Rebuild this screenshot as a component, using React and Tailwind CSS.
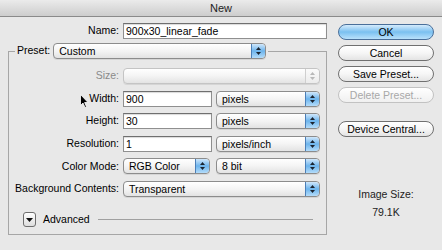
import React from "react";

const font = { fontFamily: '"Liberation Sans", Arial, sans-serif' };

const Stepper = ({ disabled }) => (
  <div
    className={
      disabled
        ? "flex flex-col items-center justify-center gap-[2px] w-[14px] h-full rounded-r-[4px] border-l border-[#cfcfcf] bg-linear-to-b from-[#fafafa] to-[#ececec]"
        : "flex flex-col items-center justify-center gap-[2px] w-[14px] h-full rounded-r-[4px] border-l border-[#4b7fb8] bg-linear-to-b from-[#cfe7fb] via-[#6cb4ec] to-[#b3dcfa]"
    }
  >
    <svg width="5" height="3" viewBox="0 0 5 3">
      <path d="M2.5 0L5 3H0z" fill={disabled ? "#b8b8b8" : "#1b2430"} />
    </svg>
    <svg width="5" height="3" viewBox="0 0 5 3">
      <path d="M0 0h5L2.5 3z" fill={disabled ? "#b8b8b8" : "#1b2430"} />
    </svg>
  </div>
);

const Select = ({ value, className, disabled }) => (
  <div
    className={`flex items-stretch h-[16px] rounded-[4px] border ${
      disabled ? "border-[#c4c4c4]" : "border-[#8c8c8c]"
    } bg-linear-to-b from-white via-[#f4f4f4] to-[#e3e3e3] shadow-[0_1px_0_rgba(0,0,0,0.08)] ${className}`}
  >
    <div className="flex-1 pl-[5px] leading-[14px] text-[10.5px] text-black">{value}</div>
    <Stepper disabled={disabled} />
  </div>
);

const Input = ({ value, className }) => (
  <div
    className={`h-[16px] bg-white border border-[#8f8f8f] border-t-[#6f6f6f] shadow-[inset_0_1px_1px_rgba(0,0,0,0.15)] pl-[2px] leading-[14px] text-[10.5px] text-black ${className}`}
  >
    {value}
  </div>
);

const Button = ({ label, primary, disabled, className = "" }) => (
  <div
    className={`h-[16px] w-[96px] rounded-full border text-center leading-[14px] text-[10.5px] ${
      primary
        ? "border-[#4a6f9a] bg-linear-to-b from-[#d4ebfc] via-[#7ac0f0] to-[#b9e1fb] text-black"
        : disabled
        ? "border-[#c2c2c2] bg-linear-to-b from-white to-[#f0f0f0] text-[#a8a8a8]"
        : "border-[#707070] bg-linear-to-b from-white via-[#f6f6f6] to-[#e4e4e4] text-black"
    } ${className}`}
  >
    {label}
  </div>
);

const Row = ({ label, children, labelClass = "text-black" }) => (
  <div className="flex items-center h-[16px]">
    <div className={`w-[104px] text-right text-[10.5px] whitespace-nowrap flex justify-end ${labelClass}`}>
      {label}
    </div>
    <div className="flex items-center gap-[4px] ml-[4px]">{children}</div>
  </div>
);

export default function App() {
  return (
    <div className="w-[442px] h-[250px] bg-[#e8e8e8] overflow-hidden relative" style={font}>
      <div className="h-[17px] border-b border-[#8a8a8a] bg-linear-to-b from-[#ebebeb] to-[#cdcdcd] text-center text-[11px] leading-[16px] text-[#222]">
        New
      </div>
      <div className="flex">
        <div className="w-[330px]">
          <div className="flex items-center mt-[6px] ml-[8px]">
            <div className="w-[111px] text-right text-[10.5px]">Name:</div>
            <Input value="900x30_linear_fade" className="ml-[4px] w-[204px]" />
          </div>
          <fieldset className="mt-[4px] ml-[8px] w-[319px] h-[192px] border border-[#a6a6a6] px-[6px]">
            <legend className="px-[2px]">
              <div className="flex items-center">
                <span className="text-[10.5px] mr-[3px]">Preset:</span>
                <Select value="Custom" className="w-[213px]" />
              </div>
            </legend>
            <div className="flex flex-col gap-[6.6px] mt-[9px]">
              <Row label="Size:" labelClass="text-[#8a8a8a]">
                <Select value="" disabled className="w-[197px]" />
              </Row>
              <Row label="Width:">
                <Input value="900" className="w-[89px]" />
                <Select value="pixels" className="w-[104px]" />
              </Row>
              <Row label="Height:">
                <Input value="30" className="w-[89px]" />
                <Select value="pixels" className="w-[104px]" />
              </Row>
              <Row label="Resolution:">
                <Input value="1" className="w-[89px]" />
                <Select value="pixels/inch" className="w-[104px]" />
              </Row>
              <Row label="Color Mode:">
                <Select value="RGB Color" className="w-[87px]" />
                <Select value="8 bit" className="w-[104px] ml-[2px]" />
              </Row>
              <Row label="Background Contents:">
                <Select value="Transparent" className="w-[197px]" />
              </Row>
            </div>
            <div className="flex items-center mt-[15px] ml-[8px] mr-[7px]">
              <div className="w-[13px] h-[15px] rounded-[3px] border border-[#6e6e6e] bg-linear-to-b from-white to-[#dedede] flex items-center justify-center">
                <svg width="7" height="4" viewBox="0 0 7 4">
                  <path d="M0 0h7L3.5 4z" fill="#111" />
                </svg>
              </div>
              <span className="ml-[7px] text-[10.5px]">Advanced</span>
              <div className="flex-1 ml-[8px] h-px bg-[#a0a0a0]" />
            </div>
          </fieldset>
        </div>
        <div className="flex flex-col items-center ml-[8px] w-[96px]">
          <Button label="OK" primary className="mt-[7px]" />
          <Button label="Cancel" className="mt-[5px]" />
          <Button label="Save Preset..." className="mt-[5px]" />
          <Button label="Delete Preset..." disabled className="mt-[5px]" />
          <Button label="Device Central..." className="mt-[18px]" />
          <div className="mt-[50px] text-[10.5px] text-[#222]">Image Size:</div>
          <div className="mt-[2px] text-[10.5px] text-[#222]">79.1K</div>
        </div>
      </div>
      <svg className="absolute left-[80px] top-[94px]" width="9" height="14" viewBox="0 0 9 14">
        <path d="M0.5 0.5V11.5L3 9L5 13.5L6.5 12.8L4.6 8.5H8z" fill="#000" stroke="#fff" strokeWidth="0.8" />
      </svg>
    </div>
  );
}
